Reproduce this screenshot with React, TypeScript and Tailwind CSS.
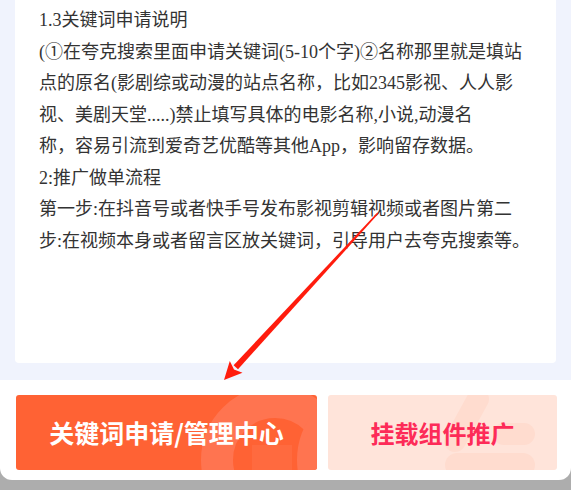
const LINES = [
  ["1.3关键词申请说明"],
  [
    "(①在夸克搜索里面申请关键词(5-10个字)②名称那里就是填站",
    "点的原名(影剧综或动漫的站点名称，比如2345影视、人人影",
    "视、美剧天堂.....)禁止填写具体的电影名称,小说,动漫名",
    "称，容易引流到爱奇艺优酷等其他App，影响留存数据。",
  ],
  ["2:推广做单流程"],
  [
    "第一步:在抖音号或者快手号发布影视剪辑视频或者图片第二",
    "步:在视频本身或者留言区放关键词，引导用户去夸克搜索等。",
  ],
];

function Arrow() {
  return (
    <svg
      className="pointer-events-none absolute inset-0"
      width="571"
      height="490"
      viewBox="0 0 571 490"
    >
      <polygon
        points="378.6,213.6 377.4,212.4 233.6,365.3 238,369.3"
        fill="#ff1c0d"
      />
      <polygon
        points="224,380 242.5,372.8 234,369.5 229.8,361"
        fill="#ff1c0d"
      />
    </svg>
  );
}

export default function App() {
  return (
    <div className="relative flex h-[490px] w-[571px] flex-col overflow-hidden bg-[#f0f3fd]">
      <div className="mx-[15px] h-[363px] shrink-0 rounded-b-[4px] bg-white pl-[24px] pt-[5px] font-['Liberation_Serif','Noto_Sans_CJK_SC',serif] text-[18px] leading-[31.5px] text-[#333]">
        {LINES.map((para, i) => (
          <p key={i}>
            {para.map((line) => (
              <span key={line} className="block whitespace-nowrap">
                {line}
              </span>
            ))}
          </p>
        ))}
      </div>

      <div className="mt-[17px] h-[110px] shrink-0 bg-[#adadad]">
        <div className="flex h-[100px] gap-[11px] rounded-b-[12px] bg-white pb-[10px] pl-4 pr-[14px] pt-[15px] font-['Noto_Sans_CJK_SC',sans-serif] font-bold">
          <button className="relative flex w-[301px] items-center justify-center overflow-hidden rounded-[3px] bg-[#ff6234] text-[25px] text-white">
            <svg className="absolute inset-0" width="301" height="75" viewBox="0 0 301 75">
              <circle cx="259" cy="65" r="58" fill="none" stroke="#ff7450" strokeWidth="32" />
              <rect x="236" y="50" width="40" height="25" fill="#ff6a3f" />
              <circle cx="355" cy="65" r="58" fill="none" stroke="#ff7450" strokeWidth="32" />
            </svg>
            <span className="relative">关键词申请/管理中心</span>
          </button>
          <button className="relative flex flex-1 items-center justify-center overflow-hidden rounded-[3px] bg-[#ffe4da] text-[24px] text-[#fd2b58]">
            <svg className="absolute inset-0" width="229" height="75" viewBox="0 0 229 75">
              <line x1="150" y1="4" x2="127" y2="46" stroke="#ffdccf" strokeWidth="22" strokeLinecap="round" />
              <rect x="165" y="28" width="42" height="22" rx="11" fill="#ffdccf" />
              <rect x="117" y="58" width="90" height="24" rx="12" fill="#ffdccf" />
            </svg>
            <span className="relative">挂载组件推广</span>
          </button>
        </div>
      </div>

      <Arrow />
    </div>
  );
}
